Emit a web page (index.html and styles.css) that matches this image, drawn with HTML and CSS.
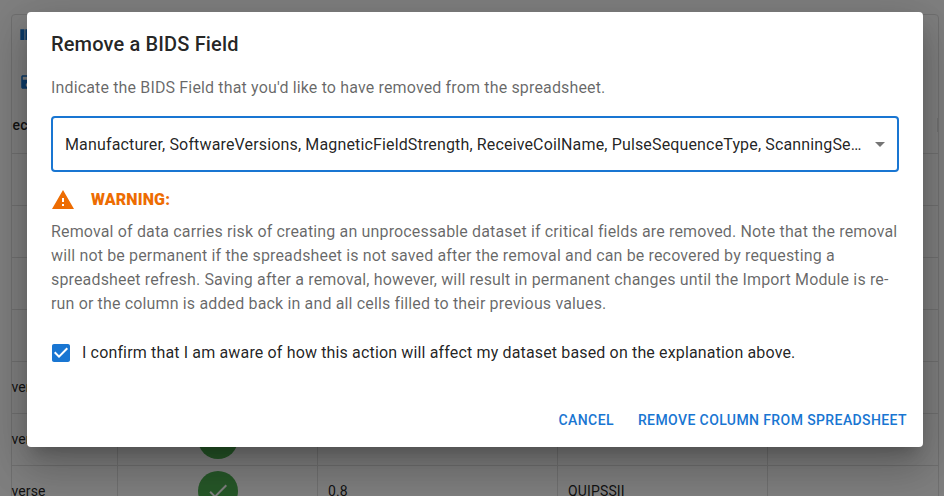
FILE: index.html
```html
<!DOCTYPE html>
<html lang="en">
<head>
<meta charset="utf-8">
<title>Remove a BIDS Field</title>
<link rel="stylesheet" href="styles.css">
</head>
<body>
<main class="page">
  <div class="data-grid">
    <div class="toolbar">
      <svg class="tool-icon columns-icon" viewBox="0 0 24 24"><path d="M10 18h5V5h-5v13zm-6 0h5V5H4v13zM16 5v13h5V5h-5z"/></svg>
      <svg class="tool-icon save-icon" viewBox="0 0 24 24"><path d="M17 3H5c-1.11 0-2 .9-2 2v14c0 1.1.89 2 2 2h14c1.1 0 2-.9 2-2V7l-4-4zm-5 16c-1.66 0-3-1.34-3-3s1.34-3 3-3 3 1.34 3 3-1.34 3-3 3zm3-10H5V5h10v4z"/></svg>
    </div>
    <div class="grid-header"><span class="header-text">ec</span><i class="separator"></i></div>
    <div class="row"></div>
    <div class="row"></div>
    <div class="row"></div>
    <div class="row"></div>
    <div class="row"><div class="cell first">verse</div><div class="cell"></div><div class="cell"></div><div class="cell"></div><div class="cell"></div></div>
    <div class="row"><div class="cell first">verse</div><div class="cell center"><span class="status"></span></div><div class="cell"></div><div class="cell"></div><div class="cell"></div></div>
    <div class="row">
      <div class="cell first">verse</div>
      <div class="cell center"><span class="status"><svg viewBox="0 0 24 24"><path d="M9 16.17 4.83 12l-1.42 1.41L9 19 21 7l-1.41-1.41z"/></svg></span></div>
      <div class="cell">0.8</div>
      <div class="cell">QUIPSSII</div>
      <div class="cell"></div>
    </div>
  </div>
</main>
<div class="backdrop">
  <section class="dialog" role="dialog" aria-labelledby="title">
    <h2 class="title" id="title">Remove a BIDS Field</h2>
    <div class="content">
      <p class="text">Indicate the BIDS Field that you'd like to have removed from the spreadsheet.</p>
      <div class="select">
        <span class="select-value">Manufacturer, SoftwareVersions, MagneticFieldStrength, ReceiveCoilName, PulseSequenceType, ScanningSequence, MRAcquisitionType</span>
        <svg class="arrow" viewBox="0 0 24 24"><path d="M7 10l5 5 5-5z"/></svg>
      </div>
      <div class="warning">
        <svg viewBox="0 0 24 24"><path d="M1 21h22L12 2 1 21zm12-3h-2v-2h2v2zm0-4h-2v-4h2v4z"/></svg>
        <strong>WARNING:</strong>
      </div>
      <p class="text">Removal of data carries risk of creating an unprocessable dataset if critical fields are removed. Note that the removal will not be permanent if the spreadsheet is not saved after the removal and can be recovered by requesting a spreadsheet refresh. Saving after a removal, however, will result in permanent changes until the Import Module is re-run or the column is added back in and all cells filled to their previous values.</p>
      <div class="confirm">
        <svg viewBox="0 0 24 24"><path d="M19 3H5c-1.11 0-2 .9-2 2v14c0 1.1.89 2 2 2h14c1.11 0 2-.9 2-2V5c0-1.1-.89-2-2-2zm-9 14l-5-5 1.41-1.41L10 14.17l7.59-7.59L19 8l-9 9z"/></svg>
        <span>I confirm that I am aware of how this action will affect my dataset based on the explanation above.</span>
      </div>
    </div>
    <div class="actions">
      <button class="button">CANCEL</button>
      <button class="button">REMOVE COLUMN FROM SPREADSHEET</button>
    </div>
  </section>
</div>
</body>
</html>
```
FILE: styles.css
```css
* { box-sizing: border-box; }

body {
  margin: 0;
  height: 496px;
  overflow: hidden;
  background: #fff;
  color: rgba(0, 0, 0, 0.87);
  font: 400 16px/24px Roboto, sans-serif;
  letter-spacing: 0.00938em;
}

.page {
  height: 496px;
  padding: 14px 5px 0 11px;
  overflow: hidden;
}

.data-grid {
  height: 600px;
  border: 1px solid #e0e0e0;
  border-radius: 4px;
  font-size: 14px;
  letter-spacing: 0.01071em;
}

.toolbar {
  display: flex;
  flex-direction: column;
  height: 82px;
  padding: 10px 0 0 5px;
  fill: #1976d2;
}

.columns-icon { width: 20px; height: 20px; }
.save-icon { width: 18px; height: 18px; margin: 28px 0 0 2px; }

.grid-header {
  display: flex;
  align-items: center;
  justify-content: space-between;
  height: 57px;
  border-bottom: 1px solid #e0e0e0;
  font-weight: 500;
}

.header-text { padding-left: 0.5px; }
.separator { width: 2px; height: 14px; background: #e0e0e0; margin-right: -1px; }

.row {
  display: grid;
  grid-template-columns: 106px 200px 240px 210px 1fr;
  height: 52px;
  border-bottom: 1px solid #e0e0e0;
}

.cell {
  display: flex;
  align-items: center;
  padding: 0 10px 2px;
  border-right: 1px solid #e0e0e0;
}

.cell:last-child { border-right: 0; }
.first { padding-left: 0; text-indent: -0.6px; }
.center { justify-content: center; }

.status {
  display: flex;
  align-items: center;
  justify-content: center;
  flex: none;
  width: 40px;
  height: 40px;
  border-radius: 50%;
  background: #4caf50;
}

.status svg { width: 24px; fill: #fff; }

.backdrop {
  position: absolute;
  inset: 0;
  padding: 12px 21px 0 27px;
  background: rgba(0, 0, 0, 0.5);
}

.dialog {
  height: 435px;
  border-radius: 4px;
  background: #fff;
  box-shadow: 0 11px 15px -7px rgba(0, 0, 0, 0.2),
    0 24px 38px 3px rgba(0, 0, 0, 0.14),
    0 9px 46px 8px rgba(0, 0, 0, 0.12);
}

.title {
  margin: 0;
  padding: 16px 24px;
  font-size: 20px;
  font-weight: 500;
  line-height: 32px;
  letter-spacing: 0.0075em;
}

.content { height: 318px; padding: 0 24px; }

.text { margin: 0; color: rgba(0, 0, 0, 0.6); }

.select {
  display: flex;
  align-items: center;
  height: 56px;
  margin-top: 16px;
  padding: 0 5px 0 12px;
  border: 2px solid #1976d2;
  border-radius: 4px;
}

.select-value {
  flex: none;
  width: 797px;
  padding-top: 2px;
  overflow: hidden;
  white-space: nowrap;
  text-overflow: ellipsis;
}

.arrow { width: 24px; height: 24px; margin-left: auto; fill: rgba(0, 0, 0, 0.54); }

.warning {
  display: flex;
  align-items: center;
  gap: 16px;
  height: 24px;
  margin: 16px 0 8px;
  color: #ed6c02;
}

.warning svg { width: 24px; height: 24px; fill: #ed6c02; }
.warning strong { font-weight: 900; }

.confirm {
  display: flex;
  align-items: center;
  gap: 9px;
  margin: 25px 0 0 -2px;
}

.confirm svg { width: 24px; height: 24px; fill: #1976d2; }

.actions {
  display: flex;
  justify-content: flex-end;
  gap: 8px;
  padding: 8px;
}

.button {
  height: 37px;
  padding: 6px 8px;
  border: 0;
  background: none;
  color: #1976d2;
  font: 500 14px/24.5px Roboto, sans-serif;
  letter-spacing: 0.02857em;
}
```
